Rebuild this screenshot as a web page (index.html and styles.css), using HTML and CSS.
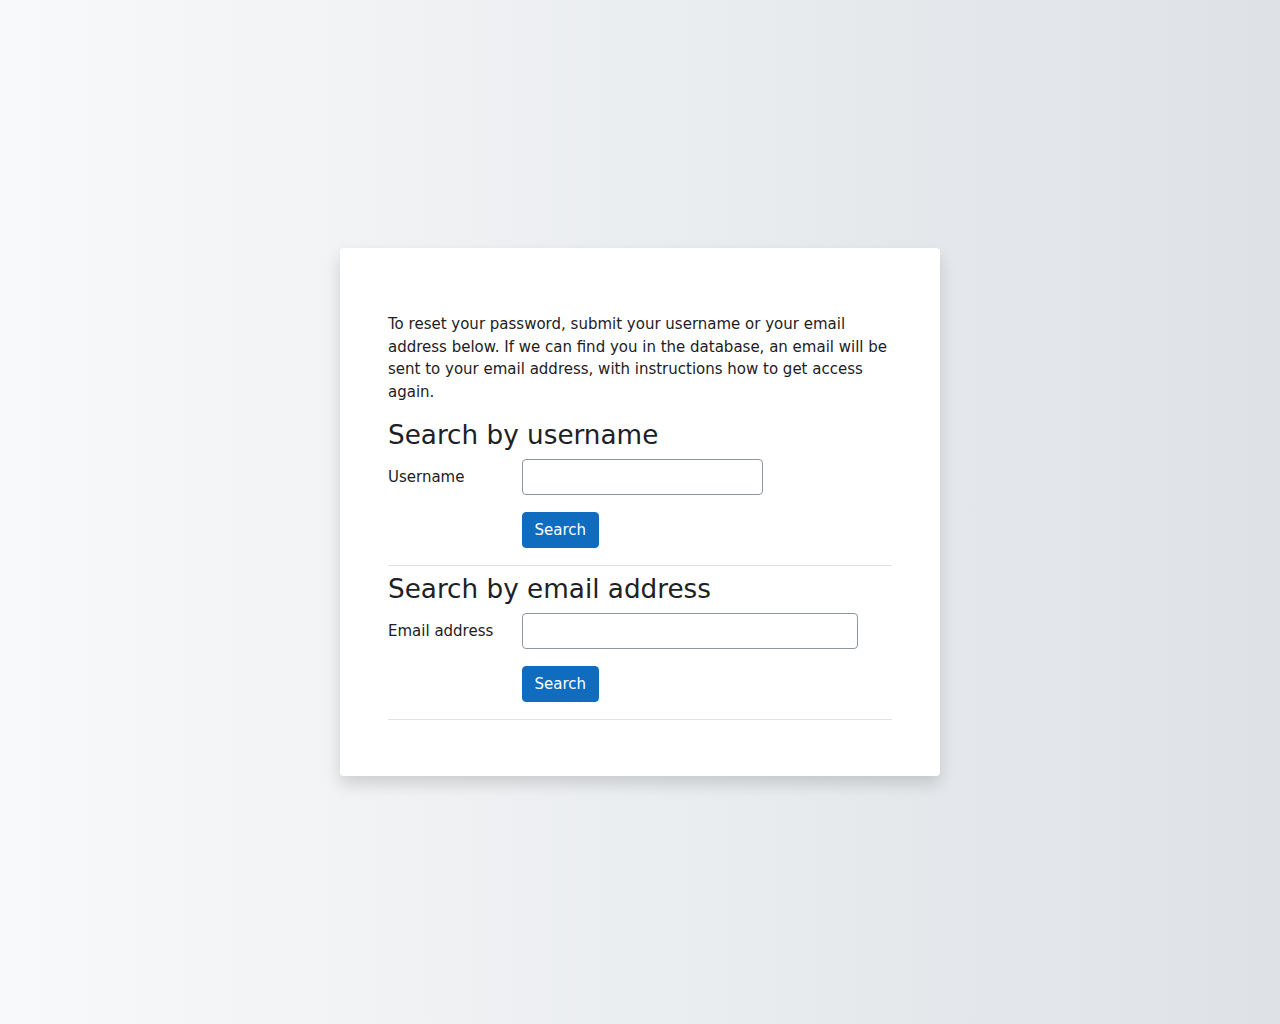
FILE: index.html
```html
<!DOCTYPE html>
<html lang="en">
<head>
<meta charset="utf-8">
<title>Forgotten password</title>
<link rel="stylesheet" href="styles.css">
</head>
<body>
<main class="page">
  <div class="card">
    <p class="intro">To reset your password, submit your username or your email address below. If we can find you in the database, an email will be sent to your email address, with instructions how to get access again.</p>
    <form class="mform">
      <fieldset class="section">
        <h3 class="legend">Search by username</h3>
        <div class="row">
          <label class="label" for="username">Username</label>
          <div class="field"><input id="username" class="input input-user" type="text"></div>
        </div>
        <div class="row row-btn">
          <div class="label"></div>
          <div class="field"><button type="button" class="btn">Search</button></div>
        </div>
      </fieldset>
      <fieldset class="section">
        <h3 class="legend">Search by email address</h3>
        <div class="row">
          <label class="label" for="email">Email address</label>
          <div class="field"><input id="email" class="input input-email" type="text"></div>
        </div>
        <div class="row row-btn">
          <div class="label"></div>
          <div class="field"><button type="button" class="btn">Search</button></div>
        </div>
      </fieldset>
    </form>
  </div>
</main>
</body>
</html>
```

FILE: styles.css
```css
* { box-sizing: border-box; }

html, body {
  margin: 0;
  padding: 0;
  height: 100%;
}

body {
  font-family: "DejaVu Sans", sans-serif;
  font-size: 15px;
  line-height: 1.5;
  color: #1d2125;
  background: linear-gradient(to right, #f8f9fa 0%, #dee2e6 100%);
}

.page {
  height: 100vh;
  display: flex;
  align-items: center;
  justify-content: center;
}

.card {
  width: 600px;
  background: #fff;
  border-radius: 4px;
  box-shadow: 0 8px 16px rgba(0, 0, 0, 0.15);
  padding: 65px 48px 48px;
}

.intro {
  margin: 0 0 17px;
}

.mform {
  margin: 0;
}

.section {
  border: 0;
  margin: 0 0 8.5px;
  padding: 0;
  border-bottom: 1px solid #dee2e6;
  min-width: 0;
}

.legend {
  font-family: "DejaVu Sans", sans-serif;
  font-size: 26.25px;
  font-weight: 400;
  line-height: 31.5px;
  height: 31.5px;
  margin: 0 0 7.5px;
}

.row {
  display: flex;
  align-items: flex-start;
  margin-bottom: 17px;
}

.row-btn {
  margin-bottom: 16.5px;
}

.label {
  flex: 0 0 134px;
  padding-top: 6.5px;
  line-height: 22.5px;
}

.field {
  flex: 1;
}

.input {
  display: block;
  height: 35.5px;
  border: 1px solid #8f959e;
  border-radius: 4px;
  background: #fff;
  font: inherit;
  padding: 5.6px 11.25px;
}

.input-user { width: 241px; }
.input-email { width: 336px; }

.btn {
  display: block;
  height: 36.5px;
  font-family: "DejaVu Sans", sans-serif;
  font-size: 15px;
  line-height: 22.5px;
  color: #fff;
  background: #0f6cbf;
  border: 1px solid #0f6cbf;
  border-radius: 4px;
  padding: 0 11.5px;
  cursor: pointer;
}
```
